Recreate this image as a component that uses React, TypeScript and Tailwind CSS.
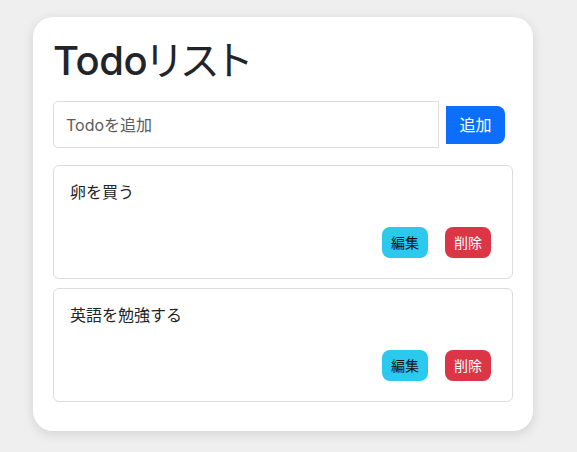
import React from "react";

const items = ["卵を買う", "英語を勉強する"];

export default function App() {
  return (
    <div
      className="min-h-[452px] w-full bg-[#efefef] pl-[33px] pt-[17px]"
      style={{ fontFamily: 'Inter, "Noto Sans CJK JP", sans-serif' }}
    >
      <div className="w-[500px] rounded-[20px] bg-white p-5 shadow-[0_3px_12px_rgba(0,0,0,0.12)]">
        <h1 className="mb-4 text-[40px] leading-[48px] text-[#212529]">
          <span className="font-medium tracking-[-0.5px]">Todo</span>
          <span className="font-normal tracking-[2px] [font-feature-settings:'palt']">リスト</span>
        </h1>
        <div className="mb-[17px] flex items-center">
          <input
            className="h-[47px] w-[386px] rounded-l-[5px] border border-[#dcdcdc] px-3 text-[16px] text-[#212529] outline-none placeholder:text-[#5c5c5c]"
            placeholder="Todoを追加"
          />
          <button className="ml-[7px] h-[38px] w-[59px] rounded-r-[8px] bg-[#0d6efd] text-[16px] text-white">
            追加
          </button>
        </div>
        {items.map((t) => (
          <div
            key={t}
            className="mb-[9px] h-[114px] rounded-[6px] border border-[#dcdcdc] pt-[14px] pr-[21px] pl-4"
          >
            <div className="text-[16px] leading-6 text-[#212529]">{t}</div>
            <div className="mt-[23px] flex justify-end gap-[17px]">
              <button className="h-[31px] w-[46px] rounded-[8px] bg-[#2cc9ee] text-[14px] text-[#111]">
                編集
              </button>
              <button className="h-[31px] w-[46px] rounded-[8px] bg-[#dc3545] text-[14px] text-white">
                削除
              </button>
            </div>
          </div>
        ))}
      </div>
    </div>
  );
}
